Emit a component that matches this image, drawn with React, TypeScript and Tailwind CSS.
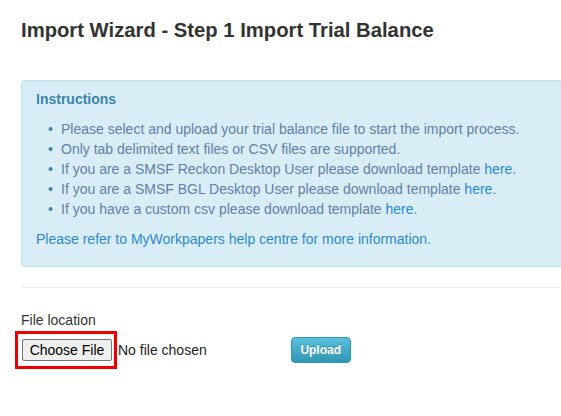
export default function App() {
  const items = [
    { text: 'Please select and upload your trial balance file to start the import process.' },
    { text: 'Only tab delimited text files or CSV files are supported.' },
    { text: 'If you are a SMSF Reckon Desktop User please download template ', link: 'here' },
    { text: 'If you are a SMSF BGL Desktop User please download template ', link: 'here' },
    { text: 'If you have a custom csv please download template ', link: 'here' },
  ];

  return (
    <div className="min-h-screen bg-white pl-[21px] pt-[16px] overflow-hidden" style={{ fontFamily: '"Liberation Sans", Arial, sans-serif' }}>
      <h1 className="text-[20.25px] font-bold leading-[28px] text-[#333333]">Import Wizard - Step 1 Import Trial Balance</h1>

      {/* instructions box */}
      <div className="mt-[36px] w-[560px] h-[187px] rounded-l-[4px] border border-r-0 border-[#bce8f1] bg-[#d9edf7] pl-[14px] pt-[8px]">
        <h4 className="text-[14px] font-bold leading-[20px] text-[#3a87ad]">Instructions</h4>
        <ul className="mt-[10px] pl-[12px] text-[14px] leading-[20px] text-[#5f82a6]">
          {items.map((item, i) => (
            <li key={i} className="flex">
              <span className="w-[13px] shrink-0 text-[#3a87ad]">•</span>
              <span>
                {item.text}
                {item.link && <a className="text-[#1f8bd3]">{item.link}</a>}
                {item.link && '.'}
              </span>
            </li>
          ))}
        </ul>
        <p className="mt-[10px] text-[14px] leading-[20px] text-[#2e8acc]">Please refer to MyWorkpapers help centre for more information.</p>
      </div>

      <div className="mt-[20px] h-px bg-[#eeeeee]"></div>

      <div className="mt-[22px] text-[14px] leading-[20px] text-[#333333]">File location</div>

      <div className="mt-[1px] flex items-center">
        <div className="-ml-[6px] flex items-center">
          <div className="border-[3px] border-[#ee0000] p-[4px] pr-[2px]">
            <button className="h-[22px] w-[90px] rounded-[2px] border border-[#767676] bg-[#efefef] text-[14px] leading-[20px] text-[#000000]">Choose File</button>
          </div>
          <span className="ml-[1px] text-[14px] text-[#222222]">No file chosen</span>
        </div>
        <button className="ml-[84px] h-[26px] w-[60px] rounded-[4px] border border-[#2f96b4] bg-gradient-to-b from-[#5bc0de] to-[#2f96b4] text-[12px] font-bold text-white" style={{ textShadow: '0 -1px 0 rgba(0,0,0,0.25)' }}>Upload</button>
      </div>
    </div>
  );
}
